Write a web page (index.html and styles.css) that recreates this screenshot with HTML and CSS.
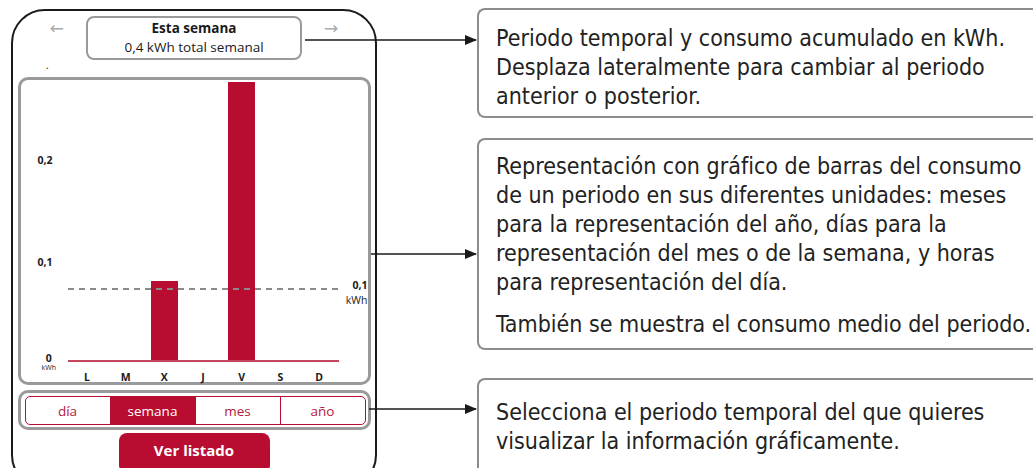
FILE: index.html
```html
<!DOCTYPE html>
<html lang="es">
<head>
  <meta charset="UTF-8">
  <title>Consumo semanal</title>
  <link rel="stylesheet" href="styles.css">
</head>
<body>

  <div class="page">

    <div class="phone">
      <div class="period">
        <span class="nav">&larr;</span>
        <div class="period-box">
          <b>Esta semana</b>
          <span>0,4 kWh total semanal</span>
        </div>
        <span class="nav">&rarr;</span>
      </div>
      <div class="dot">.</div>

      <div class="chart-box">
        <div class="axis">
          <span class="tick" style="bottom: 196px">0,2</span>
          <span class="tick" style="bottom: 94px">0,1</span>
          <span class="tick zero" style="bottom: -10px">0<small>kWh</small></span>
        </div>
        <div class="plot">
          <div class="col"><div class="bar" style="height: 0px"></div></div>
          <div class="col"><div class="bar" style="height: 0px"></div></div>
          <div class="col"><div class="bar" style="height: 79px"></div></div>
          <div class="col"><div class="bar" style="height: 0px"></div></div>
          <div class="col"><div class="bar" style="height: 278px"></div></div>
          <div class="col"><div class="bar" style="height: 0px"></div></div>
          <div class="col"><div class="bar" style="height: 0px"></div></div>
          <div class="avg" style="bottom: 70px"></div>
        </div>
        <div class="avg-label" style="bottom: 74px"><b>0,1</b>kWh</div>
        <div class="days">
          <span>L</span><span>M</span><span>X</span><span>J</span><span>V</span><span>S</span><span>D</span>
        </div>
      </div>

      <div class="tabs-box">
        <div class="tabs">
          <span>día</span>
          <span class="active">semana</span>
          <span>mes</span>
          <span>año</span>
        </div>
      </div>

      <button class="list-btn">Ver listado</button>
    </div>

    <div class="notes">
      <div class="note note-period">
        <p>Periodo temporal y consumo acumulado en kWh.<br>Desplaza lateralmente para cambiar al periodo<br>anterior o posterior.</p>
      </div>
      <div class="note note-chart">
        <p>Representación con gráfico de barras del consumo<br>de un periodo en sus diferentes unidades: meses<br>para la representación del año, días para la<br>representación del mes o de la semana, y horas<br>para representación del día.</p>
        <p>También se muestra el consumo medio del periodo.</p>
      </div>
      <div class="note note-tabs">
        <p>Selecciona el periodo temporal del que quieres<br>visualizar la información gráficamente.</p>
      </div>
    </div>

    <!-- connector arrows -->
    <svg class="links" width="1033" height="468">
      <defs>
        <marker id="head" markerWidth="12" markerHeight="10" refX="11" refY="5" orient="auto" markerUnits="userSpaceOnUse">
          <path d="M0,0 L12,5 L0,10 z" fill="#1a1a1a"/>
        </marker>
      </defs>
      <line x1="305" y1="40" x2="476" y2="40" marker-end="url(#head)"/>
      <line x1="371" y1="254" x2="476" y2="254" marker-end="url(#head)"/>
      <line x1="369" y1="409" x2="476" y2="409" marker-end="url(#head)"/>
    </svg>

  </div>

</body>
</html>
```

FILE: styles.css
```css
body {
  margin: 0;
  background: #fff;
  font-family: "Open Sans", Arial, sans-serif;
  color: #1a1a1a;
}

.page {
  position: relative;
  width: 1033px;
  height: 468px;
  overflow: hidden;
  display: flex;
  align-items: flex-start;
}

/* phone */

.phone {
  box-sizing: border-box;
  margin: 9px 0 0 11px;
  width: 366px;
  height: 480px;
  border: 2px solid #1a1a1a;
  border-radius: 34px;
  padding: 5px 4px 0;
  display: flex;
  flex-direction: column;
  align-items: center;
  flex-shrink: 0;
}

.period {
  display: flex;
  align-items: flex-start;
  gap: 22px;
}

.nav {
  color: #aaa;
  font-family: "DejaVu Sans", sans-serif;
  font-size: 17px;
  line-height: 18px;
  margin-top: 3px;
}

.period-box {
  box-sizing: border-box;
  width: 216px;
  height: 44px;
  border: 2px solid #9a9a9a;
  border-radius: 8px;
  display: flex;
  flex-direction: column;
  align-items: center;
  font-size: 13.5px;
  line-height: 19px;
  padding-top: 1px;
}

.period-box b {
  font-weight: 700;
}

.dot {
  align-self: flex-start;
  margin-left: 29px;
  font-size: 10px;
  line-height: 10px;
  height: 17px;
}

/* chart */

.chart-box {
  position: relative;
  box-sizing: border-box;
  width: 353px;
  height: 308px;
  border: 3px solid #9a9a9a;
  border-radius: 10px;
  display: grid;
  grid-template-columns: 47px 271px 1fr;
  grid-template-rows: 282px 1fr;
}

.axis {
  position: relative;
}

.tick {
  position: absolute;
  left: 17px;
  font-size: 10.5px;
  font-weight: 700;
  line-height: 12px;
}

.tick.zero {
  left: 21px;
  display: flex;
  flex-direction: column;
  align-items: center;
  line-height: 11px;
}

.tick small {
  font-size: 7px;
  font-weight: 400;
  line-height: 8px;
}

.plot {
  position: relative;
  display: flex;
  align-items: flex-end;
  border-bottom: 2px solid #c4465f;
}

.col {
  flex: 1;
  display: flex;
  justify-content: center;
}

.bar {
  width: 27px;
  background: #b80d30;
}

.avg {
  position: absolute;
  left: 0;
  right: 0;
  height: 2px;
  background: repeating-linear-gradient(90deg, #8a8a8a 0 6px, transparent 6px 11px);
}

.avg-label {
  position: absolute;
  right: 0;
  display: flex;
  flex-direction: column;
  align-items: flex-end;
  font-size: 10.5px;
  line-height: 15px;
}

.days {
  grid-column: 2;
  display: flex;
  font-size: 10.5px;
  font-weight: 700;
  padding-top: 8px;
}

.days span {
  flex: 1;
  text-align: center;
}

/* tabs */

.tabs-box {
  box-sizing: border-box;
  margin-top: 5px;
  width: 353px;
  height: 40px;
  border: 3px solid #9a9a9a;
  border-radius: 10px;
  padding: 3px 2px 0 4px;
}

.tabs {
  box-sizing: border-box;
  height: 29px;
  border: 1.5px solid #b80d30;
  border-radius: 5px;
  display: flex;
  overflow: hidden;
}

.tabs span {
  flex: 1;
  display: flex;
  align-items: center;
  justify-content: center;
  color: #b51a3c;
  font-size: 13.5px;
  border-left: 1.5px solid #b80d30;
}

.tabs span:first-child {
  border-left: none;
}

.tabs .active {
  background: #b80d30;
  color: #fff;
}

.list-btn {
  margin-top: 3px;
  width: 151px;
  height: 40px;
  border: none;
  border-radius: 8px;
  background: #b80d30;
  color: #fff;
  font-family: "Open Sans", Arial, sans-serif;
  font-size: 15px;
  font-weight: 700;
  padding: 0 0 6px;
}

/* notes */

.notes {
  margin-left: 100px;
  flex: 1;
  display: flex;
  flex-direction: column;
  font-family: "DejaVu Sans Condensed", "DejaVu Sans", sans-serif;
  font-stretch: condensed;
  font-size: 23px;
  line-height: 29px;
  color: #222;
}

.note {
  box-sizing: border-box;
  border: 2px solid #8c8c8c;
  border-right: none;
  border-radius: 8px 0 0 8px;
  padding: 0 0 0 17px;
  white-space: nowrap;
}

.note p {
  margin: 0;
}

.note-period {
  margin-top: 8px;
  height: 110px;
  padding-top: 14px;
}

.note-chart {
  margin-top: 20px;
  height: 212px;
  padding-top: 12px;
}

.note-chart p + p {
  margin-top: 13px;
}

.note-tabs {
  margin-top: 28px;
  height: 100px;
  padding-top: 18px;
}

.links {
  position: absolute;
  left: 0;
  top: 0;
}

.links line {
  stroke: #1a1a1a;
  stroke-width: 1.5;
}
```
